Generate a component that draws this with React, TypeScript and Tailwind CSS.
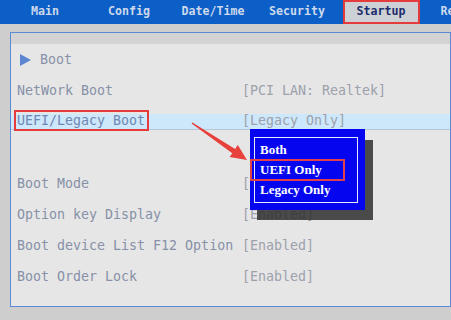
const tabs = ["Main", "Config", "Date/Time", "Security", "Startup", "Restart"]

const rows = [
  { label: "Boot", value: "", arrow: true },
  { label: "NetWork Boot", value: "[PCI LAN: Realtek]" },
  { label: "UEFI/Legacy Boot", value: "[Legacy Only]", selected: true },
  { label: "", value: "" },
  { label: "Boot Mode", value: "[" },
  { label: "Option key Display", value: "[Enabled]" },
  { label: "Boot device List F12 Option", value: "[Enabled]" },
  { label: "Boot Order Lock", value: "[Enabled]" },
]

const options = ["Both", "UEFI Only", "Legacy Only"]

function TopBar() {
  return (
    <div className="flex h-[24px] bg-[#0b5fc7] pl-[3px]">
      {tabs.map((t) =>
        t === "Startup" ? (
          <div key={t} className="flex w-[84px] shrink-0 justify-center">
            <div className="flex w-[77px] items-center justify-center border-2 border-[#e63b3b] bg-[#cdd1d6] text-[11.6px] font-bold text-[#1c2b6b]">
              {t}
            </div>
          </div>
        ) : (
          <div
            key={t}
            className="flex w-[84px] shrink-0 items-center justify-center text-[11.6px] font-bold text-[#cdd9ec]"
          >
            {t}
          </div>
        )
      )}
    </div>
  )
}

function Row({ label, value, arrow, selected }: { label: string; value: string; arrow?: boolean; selected?: boolean }) {
  const inner = (
    <>
      <div className="flex w-[231px] shrink-0 items-center pl-[6px]">
        {arrow && (
          <svg width="11" height="12" viewBox="0 0 11 12" className="ml-[3px] mr-[9px]">
            <polygon points="0,0 11,6 0,12" fill="#5b86cf" />
          </svg>
        )}
        {selected ? (
          <span className="relative leading-[16px] text-[#6f87b4]">
            {label}
            <span className="absolute -left-[3px] -right-[4px] -top-[3px] -bottom-[2px] border-2 border-[#e63b3b]" />
          </span>
        ) : (
          <span className="text-[#8791a8]">{label}</span>
        )}
      </div>
      <span className="text-[#9ca1ac]">{value}</span>
    </>
  )
  return (
    <div className="flex h-[31px] items-center">
      {selected ? (
        <div className="flex h-[16px] w-full items-center border-b border-[#b4c8da] bg-[#cde8fb]">{inner}</div>
      ) : (
        inner
      )}
    </div>
  )
}

function Popup() {
  return (
    <>
      <div className="absolute left-[246px] top-[96px] h-[80px] w-[116px] bg-[#2e2e2e]/85" />
      <div className="absolute left-[239px] top-[85px] h-[81px] w-[115px] bg-[#0505f0]">
        <div className="absolute left-[4px] top-[8px] h-[66px] w-[104px] border border-[#e8e8ff] pl-[5px] pt-[2px]">
          {options.map((o) => (
            <div
              key={o}
              className="flex h-[20px] items-center text-[13px] font-bold text-white"
              style={{ fontFamily: '"Liberation Serif", serif' }}
            >
              {o}
            </div>
          ))}
        </div>
        <div className="absolute left-0 top-[30px] h-[22px] w-[95px] border-2 border-[#e2414b]" />
      </div>
    </>
  )
}

export default function App() {
  return (
    <div
      className="relative flex h-[320px] w-[451px] flex-col overflow-hidden bg-[#cecece]"
      style={{ fontFamily: '"DejaVu Sans Mono", monospace' }}
    >
      <TopBar />
      <div className="pl-[10px] pt-[8px]">
        <div className="flex h-[275px] w-[441px] flex-col border border-[#5b8bd4]">
          <div className="h-[11px] bg-[#d3d3d3]" />
          <div className="relative flex-1 bg-[#e6e6e6] text-[13.3px]">
            {rows.map((r, i) => (
              <Row key={i} {...r} />
            ))}
            <Popup />
          </div>
        </div>
      </div>
      <svg className="pointer-events-none absolute inset-0" width="451" height="320">
        <polygon
          points="192.4,122.4 235.1,149 237.8,145.1 247,160 229.6,157.1 232.3,153.2 191.6,123.6"
          fill="#e8403a"
        />
      </svg>
    </div>
  )
}
